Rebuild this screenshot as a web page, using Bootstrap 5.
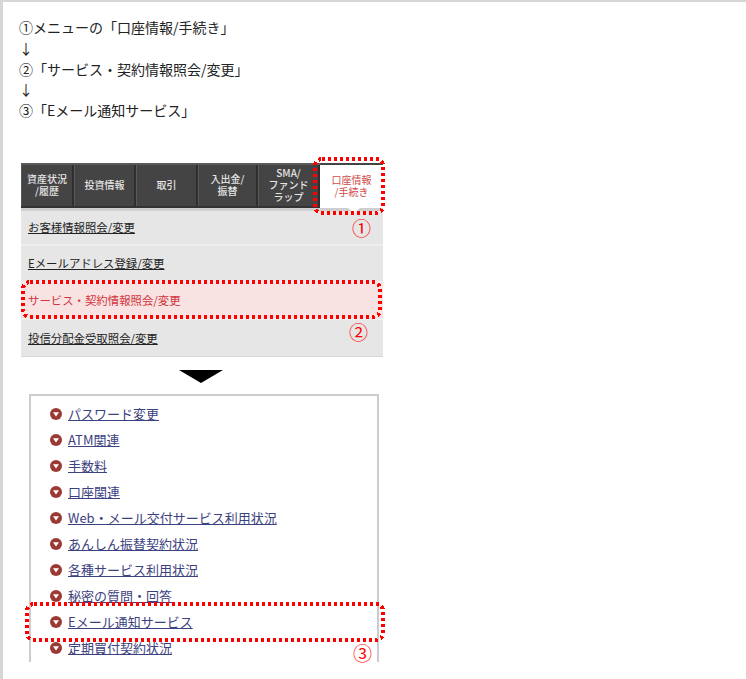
<!DOCTYPE html>
<html lang="ja">
<head>
<meta charset="utf-8">
<title>Eメール通知サービス</title>
<link rel="stylesheet" href="https://cdn.jsdelivr.net/npm/bootstrap@5.3.0/dist/css/bootstrap.min.css">
<style>
html,body{height:100%}
body{background:#fff;border-left:3px solid #d6d6d6;border-top:2px solid #d6d6d6;overflow:hidden;font-family:"Noto Sans CJK JP","Liberation Sans",sans-serif;color:#222}
.steps{margin:0;padding:15px 0 0 16px;font-size:14px;line-height:20.8px}
.figure-wrap{position:relative;width:743px;height:514px;margin-top:42px}
.menu-wrap{margin-left:18px;width:362px}
.tabbar{height:45px;background:#444;border-top:2px solid #5a5a5a;border-bottom:2px solid #333}
.tabbar>div{height:100%;color:#e4e4e4;font-size:10px;line-height:12px;font-weight:500;text-align:center;border-right:2px solid #2f2f2f;border-left:1px solid #5a5a5a}
.tab-a{width:53px}.tab-b{width:62px}.tab-c{width:62px}.tab-d{width:60px}.tab-e{width:62px}
.tabbar>.tab-f{width:63px;background:#fff;color:#d04a4a;font-weight:400;border:0;margin-top:-2px;height:45px;border-top:2px solid #444}
.submenu{background:#e6e6e6;border-top:3px solid #cfcfcf;border-bottom:1px solid #d8d8d8;position:relative;height:149px}
.sub-row{height:37px;font-size:11.4px;padding-left:7px;border-bottom:2px solid #eee}
.sub-row:first-of-type{height:35px}
.sub-row:last-child{border-bottom:0}
.sub-row a{color:#222}
.sub-on{background:#f8e2e2;color:#d1343c}
.notch{position:absolute;left:327px;top:-3px;width:0;height:0;border-style:solid;border-width:5px 6px 0;border-color:#fff transparent transparent}
.tri{width:0;height:0;margin:13px 0 0 176px;border-style:solid;border-width:13px 22px 0;border-color:#000 transparent transparent}
.linkbox{margin:11px 0 0 26px;width:350px;height:268px;border:2px solid #ccc;border-bottom:0;list-style:none;padding:5px 0 0 19px;overflow:hidden}
.linkbox li{height:26px;font-size:13px;line-height:26px;gap:6px}
.linkbox a{color:#3c4180}
.bullet{flex:none;width:12px;height:12px;margin-top:1px}
.outline{position:absolute;overflow:visible;fill:none;stroke:#f00;stroke-width:4;stroke-dasharray:3 3;shape-rendering:crispEdges}
.ol-1{left:310px;top:-6px}
.ol-2{left:18px;top:117px}
.ol-3{left:22px;top:439px}
.num{position:absolute;color:#f00;font-size:19px;line-height:20px}
.n-1{left:349px;top:55px}.n-2{left:346px;top:159px}.n-3{left:350px;top:480px}
</style>
</head>
<body>
<p class="steps">①メニューの「口座情報/手続き」<br>↓<br>②「サービス・契約情報照会/変更」<br>↓<br>③「Eメール通知サービス」</p>
<div class="figure-wrap">
  <div class="menu-wrap">
    <div class="tabbar d-flex">
      <div class="tab-a d-flex align-items-center justify-content-center">資産状況<br>/履歴</div>
      <div class="tab-b d-flex align-items-center justify-content-center">投資情報</div>
      <div class="tab-c d-flex align-items-center justify-content-center">取引</div>
      <div class="tab-d d-flex align-items-center justify-content-center">入出金/<br>振替</div>
      <div class="tab-e d-flex align-items-center justify-content-center">SMA/<br>ファンド<br>ラップ</div>
      <div class="tab-f d-flex align-items-center justify-content-center">口座情報<br>/手続き</div>
    </div>
    <div class="submenu">
      <span class="notch"></span>
      <div class="sub-row d-flex align-items-center"><a href="#">お客様情報照会/変更</a></div>
      <div class="sub-row d-flex align-items-center"><a href="#">Eメールアドレス登録/変更</a></div>
      <div class="sub-row sub-on d-flex align-items-center">サービス・契約情報照会/変更</div>
      <div class="sub-row d-flex align-items-center"><a href="#">投信分配金受取照会/変更</a></div>
    </div>
  </div>
  <div class="tri"></div>
  <ul class="linkbox">
    <li class="d-flex align-items-center"><svg class="bullet" viewBox="0 0 12 12"><circle cx="6" cy="6" r="6" fill="#9b3a35"/><path d="M3 4.2h6L6 8.6z" fill="#fff"/></svg><a href="#">パスワード変更</a></li>
    <li class="d-flex align-items-center"><svg class="bullet" viewBox="0 0 12 12"><circle cx="6" cy="6" r="6" fill="#9b3a35"/><path d="M3 4.2h6L6 8.6z" fill="#fff"/></svg><a href="#">ATM関連</a></li>
    <li class="d-flex align-items-center"><svg class="bullet" viewBox="0 0 12 12"><circle cx="6" cy="6" r="6" fill="#9b3a35"/><path d="M3 4.2h6L6 8.6z" fill="#fff"/></svg><a href="#">手数料</a></li>
    <li class="d-flex align-items-center"><svg class="bullet" viewBox="0 0 12 12"><circle cx="6" cy="6" r="6" fill="#9b3a35"/><path d="M3 4.2h6L6 8.6z" fill="#fff"/></svg><a href="#">口座関連</a></li>
    <li class="d-flex align-items-center"><svg class="bullet" viewBox="0 0 12 12"><circle cx="6" cy="6" r="6" fill="#9b3a35"/><path d="M3 4.2h6L6 8.6z" fill="#fff"/></svg><a href="#">Web・メール交付サービス利用状況</a></li>
    <li class="d-flex align-items-center"><svg class="bullet" viewBox="0 0 12 12"><circle cx="6" cy="6" r="6" fill="#9b3a35"/><path d="M3 4.2h6L6 8.6z" fill="#fff"/></svg><a href="#">あんしん振替契約状況</a></li>
    <li class="d-flex align-items-center"><svg class="bullet" viewBox="0 0 12 12"><circle cx="6" cy="6" r="6" fill="#9b3a35"/><path d="M3 4.2h6L6 8.6z" fill="#fff"/></svg><a href="#">各種サービス利用状況</a></li>
    <li class="d-flex align-items-center"><svg class="bullet" viewBox="0 0 12 12"><circle cx="6" cy="6" r="6" fill="#9b3a35"/><path d="M3 4.2h6L6 8.6z" fill="#fff"/></svg><a href="#">秘密の質問・回答</a></li>
    <li class="d-flex align-items-center"><svg class="bullet" viewBox="0 0 12 12"><circle cx="6" cy="6" r="6" fill="#9b3a35"/><path d="M3 4.2h6L6 8.6z" fill="#fff"/></svg><a href="#">Eメール通知サービス</a></li>
    <li class="d-flex align-items-center"><svg class="bullet" viewBox="0 0 12 12"><circle cx="6" cy="6" r="6" fill="#9b3a35"/><path d="M3 4.2h6L6 8.6z" fill="#fff"/></svg><a href="#">定期買付契約状況</a></li>
  </ul>
  <svg class="outline ol-1" width="72" height="58"><rect x="2" y="2" width="68" height="54" rx="7"/></svg>
  <svg class="outline ol-2" width="361" height="39"><rect x="2" y="2" width="357" height="35" rx="7"/></svg>
  <svg class="outline ol-3" width="360" height="40"><rect x="2" y="2" width="356" height="36" rx="7"/></svg>
  <span class="num n-1">①</span>
  <span class="num n-2">②</span>
  <span class="num n-3">③</span>
</div>
<script src="https://cdn.jsdelivr.net/npm/bootstrap@5.3.0/dist/js/bootstrap.bundle.min.js"></script>
</body>
</html>
